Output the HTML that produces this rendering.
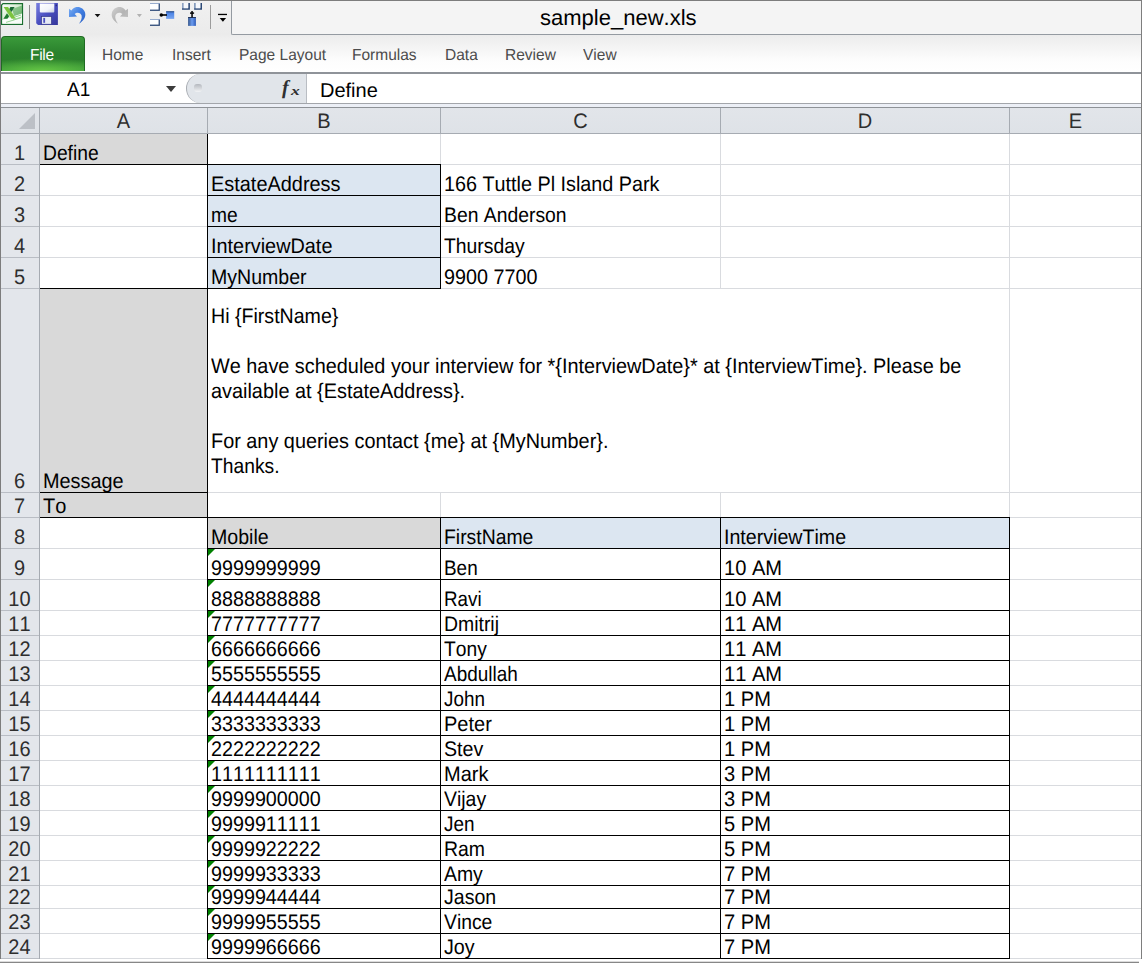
<!DOCTYPE html>
<html><head><meta charset="utf-8"><title>sample_new.xls</title>
<style>
html,body{margin:0;padding:0;}
body{font-kerning:none;font-feature-settings:"kern" 0,"liga" 0;text-rendering:geometricPrecision;width:1143px;height:964px;overflow:hidden;position:relative;background:#fff;font-family:"Liberation Sans",Arial,sans-serif;}
.a{position:absolute;}
.t{position:absolute;white-space:nowrap;font-size:20px;line-height:23px;color:#000;}
.c{position:absolute;white-space:nowrap;font-size:21px;line-height:23px;color:#000;transform-origin:0 0;transform:scaleX(0.952);}
.rh{position:absolute;left:1px;width:37px;text-align:center;font-size:21px;line-height:23px;color:#2e2e2e;transform:scaleX(0.952);}
.ch{position:absolute;top:110px;text-align:center;font-size:21px;line-height:23px;color:#2e2e2e;transform:scaleX(0.952);}
.tab{position:absolute;top:46px;font-size:16px;line-height:20px;color:#4c4c4c;white-space:nowrap;transform-origin:0 0;transform:scaleX(0.969);}
.tri{position:absolute;width:0;height:0;border-top:7px solid #008000;border-right:7px solid transparent;}
</style></head><body>

<div class="a" id="titlebar" style="left:0;top:0;width:1143px;height:35px;background:linear-gradient(#f1f1f1,#ebebeb);"></div>
<div class="a" id="titlebox" style="left:231px;top:1px;width:910px;height:33px;background:#f4f4f4;border-left:1px solid #949aa1;border-bottom:1px solid #949aa1;border-radius:0 0 0 2px;"></div>
<div class="t" id="title" style="left:540px;top:5px;font-size:22px;line-height:26px;">sample_new.xls</div>
<div class="a" id="ribbon" style="left:0;top:35px;width:1143px;height:37px;background:linear-gradient(#ececec 0%,#f3f3f3 30%,#fdfdfd 70%,#ffffff 100%);"></div>
<div class="a" id="ribbonline" style="left:0;top:72px;width:1143px;height:2px;background:#8f9399;"></div>
<div class="a" id="file" style="left:1px;top:36px;width:84px;height:35px;border-radius:4px 4px 0 0;background:radial-gradient(ellipse 75px 13px at 50% 100%,#66c644 0%,rgba(102,198,68,0) 100%),linear-gradient(#3a9a3a 0%,#2b832d 45%,#2a7f2c 70%,#35963a 100%);border:1px solid #1f6b22;border-bottom:none;box-sizing:border-box;"></div>
<div class="tab" style="left:30px;color:#fff;letter-spacing:-0.3px;">File</div>
<div class="tab" style="left:102px;">Home</div>
<div class="tab" style="left:172px;">Insert</div>
<div class="tab" style="left:239px;">Page Layout</div>
<div class="tab" style="left:352px;">Formulas</div>
<div class="tab" style="left:445px;">Data</div>
<div class="tab" style="left:505px;">Review</div>
<div class="tab" style="left:583px;">View</div>
<svg class="a" id="qat" style="left:0;top:0;" width="232" height="35" viewBox="0 0 232 35">
<defs>
<linearGradient id="gx" x1="0" y1="0" x2="1" y2="1"><stop offset="0" stop-color="#ffffff"/><stop offset="0.45" stop-color="#d6ecd2"/><stop offset="1" stop-color="#7fc07a"/></linearGradient>
<linearGradient id="gs" x1="0" y1="0" x2="1" y2="1"><stop offset="0" stop-color="#7a80e0"/><stop offset="0.5" stop-color="#4a4fc0"/><stop offset="1" stop-color="#34369a"/></linearGradient>
<linearGradient id="gl" x1="0" y1="0" x2="1" y2="1"><stop offset="0" stop-color="#ffffff"/><stop offset="0.6" stop-color="#f2f4fa"/><stop offset="1" stop-color="#c5cce0"/></linearGradient>
<linearGradient id="gu" x1="0" y1="0" x2="1" y2="1"><stop offset="0" stop-color="#7db0f5"/><stop offset="0.5" stop-color="#3f7de0"/><stop offset="1" stop-color="#2a5fc4"/></linearGradient>
<linearGradient id="gr" x1="0" y1="0" x2="1" y2="1"><stop offset="0" stop-color="#d2d2d2"/><stop offset="0.5" stop-color="#b4b4b4"/><stop offset="1" stop-color="#c4c4c4"/></linearGradient>
<linearGradient id="gb" x1="0" y1="0" x2="0" y2="1"><stop offset="0" stop-color="#2d4f86"/><stop offset="0.3" stop-color="#4f86e6"/><stop offset="1" stop-color="#7aa6f0"/></linearGradient>
<linearGradient id="gb2" x1="0" y1="0" x2="1" y2="0"><stop offset="0" stop-color="#33558c"/><stop offset="0.5" stop-color="#6c9cf0"/><stop offset="1" stop-color="#2f5cb8"/></linearGradient>
</defs>
<!-- excel icon -->
<path d="M3 3.6 H22.5 V24.3 H1.6 V5 Z" fill="url(#gx)" stroke="#1b6e30" stroke-width="1.2"/>
<path d="M12 9 L22 5.5 L22 14 L14.5 16.5 Z" fill="#4aa24e" opacity="0.55"/>
<path d="M2.3 20 L22 13.4 L22 23.7 L2.3 23.7 Z" fill="#ffffff" opacity="0.92"/>
<path d="M3.6 7 L8 7 L16 18.8 L11.6 18.8 Z" fill="#7cc43e"/>
<path d="M10.4 7 L14.6 7 L11.4 11.9 L9.3 9 Z" fill="#1c6a38"/>
<path d="M7 13.2 L9.1 16.2 L7.4 18.8 L3.4 18.8 Z" fill="#1f7a30"/>
<path d="M14.5 17.2 l6.5 -2.2 M13 19.8 l8.5 -2.8 M6 22.4 l15 -4.6" stroke="#8fd08a" stroke-width="0.9" fill="none"/>
<!-- separators -->
<rect x="29" y="5" width="1" height="24" fill="#8c8c8c"/>
<rect x="210" y="5" width="1" height="24" fill="#9c9c9c"/>
<!-- save -->
<path d="M36.2 3 H57.9 V24.9 H38 L36.2 23.2 Z" fill="url(#gs)"/>
<path d="M39.8 3.6 H54.3 V11.6 Q54.3 12.6 53.3 12.6 H40.8 Q39.8 12.6 39.8 11.6 Z" fill="url(#gl)"/>
<rect x="55.6" y="4.6" width="1.3" height="1.6" fill="#2b2c78"/>
<rect x="41.6" y="16.6" width="9.8" height="7.6" fill="#e6eaf4" stroke="#2f317f" stroke-width="0.6"/>
<rect x="43.3" y="17.9" width="1.8" height="4.9" fill="#4a4fc0"/>
<!-- undo -->
<path d="M69 8.8 L69 17 L77 16.4 L74.6 14.1 C76.8 11.8 80.8 12.4 81.6 15.6 C82.2 18.6 80.8 21.4 79 23.8 C83.2 21.2 86.2 17.2 85.1 12.8 C84 8.2 79.2 5.8 75 7.4 C73.4 8 72.4 9 71.4 10.6 Z" fill="url(#gu)"/>
<path d="M94.7 13.9 H100.4 L97.55 17.3 Z" fill="#111"/>
<!-- redo -->
<path d="M128 8.8 L128 17 L120 16.4 L122.4 14.1 C120.2 11.8 116.2 12.4 115.4 15.6 C114.8 18.6 116.2 21.4 118 23.8 C113.8 21.2 110.8 17.2 111.9 12.8 C113 8.2 117.8 5.8 122 7.4 C123.6 8 124.6 9 125.6 10.6 Z" fill="url(#gr)"/>
<path d="M136.9 13.9 H141.9 L139.4 17.2 Z" fill="#b2b2b2"/>
<!-- trace 1 -->
<rect x="150" y="3.1" width="9.9" height="7.8" fill="#2d4a78"/><rect x="150" y="3.6" width="8.6" height="6" fill="#fdfeff"/><rect x="150" y="3.1" width="9.9" height="0.7" fill="#9db4d8"/>
<rect x="150" y="19.1" width="9.9" height="6.8" fill="#2d4a78"/><rect x="150" y="19.6" width="8.6" height="5" fill="#fdfeff"/><rect x="150" y="19.1" width="9.9" height="0.7" fill="#9db4d8"/>
<rect x="166.1" y="11.1" width="8.1" height="7.8" fill="url(#gb)"/>
<rect x="161" y="14.2" width="6" height="1.6" fill="#000"/><circle cx="161.3" cy="15" r="1.8" fill="#000"/>
<!-- trace 2 -->
<path d="M182 3 H183.6 V8.2 H188.2 V3 H189.9 V9.8 H182 Z" fill="#2d4a78"/><rect x="182" y="3" width="1.6" height="5.4" fill="#8ea3c4"/><rect x="183.6" y="3" width="4.6" height="5.2" fill="#f6f8fc"/>
<path d="M194.1 3 H195.7 V8.2 H200.3 V3 H202 V9.8 H194.1 Z" fill="#2d4a78"/><rect x="194.1" y="3" width="1.6" height="5.4" fill="#8ea3c4"/><rect x="195.7" y="3" width="4.6" height="5.2" fill="#f6f8fc"/>
<rect x="188.1" y="17.1" width="7.8" height="8.8" fill="url(#gb2)"/><rect x="188.1" y="17.1" width="7.8" height="0.9" fill="#1f2f50"/>
<rect x="191.3" y="11" width="1.5" height="6.4" fill="#000"/><rect x="190" y="12.4" width="4.1" height="1.4" fill="#000"/>
<!-- customize -->
<rect x="218" y="13.8" width="9" height="1.3" fill="#000"/>
<path d="M219.7 18.1 H226.1 L222.9 21.7 Z" fill="#000"/>
</svg>
<div class="a" id="fbar" style="left:0;top:74px;width:1143px;height:29px;background:#fff;"></div>
<div class="a" id="fline" style="left:0;top:103px;width:1143px;height:1px;background:#a3a6ab;"></div>
<div class="a" id="fstrip" style="left:0;top:104px;width:1143px;height:3px;background:#eceff6;"></div>
<div class="a" id="hline" style="left:0;top:107px;width:1143px;height:1px;background:#8e9297;"></div>
<div class="a" id="pill" style="left:186px;top:74px;width:121px;height:29px;background:#e1e5ea;border-left:1px solid #a9adb3;border-right:1px solid #b9bdc3;border-radius:14.5px 0 0 14.5px;box-sizing:border-box;"></div>
<div class="a" id="pilldot" style="left:194px;top:84px;width:8px;height:8px;border-radius:3px;background:linear-gradient(#b4b8be,#f2f4f6);"></div>
<div class="t" id="namebox" style="left:67px;top:79px;font-size:19.5px;line-height:22px;transform-origin:0 0;transform:scaleX(0.975);">A1</div>
<div class="a" id="ddarrow" style="left:166px;top:85.5px;width:0;height:0;border-left:5.5px solid transparent;border-right:5.5px solid transparent;border-top:6.5px solid #3c3c3c;"></div>
<div class="t" id="fx" style="left:282px;top:76px;font-family:'Liberation Serif',serif;font-style:italic;font-weight:bold;font-size:20px;line-height:24px;color:#303030;">f</div>
<div class="t" id="fx2" style="left:290.5px;top:81px;font-family:'Liberation Serif',serif;font-style:italic;font-weight:bold;font-size:13px;line-height:20px;color:#303030;transform-origin:0 0;transform:scaleX(1.35);">x</div>
<div class="t" id="ftext" style="left:320px;top:80px;font-size:20px;line-height:22px;">Define</div>
<div class="a" id="colhdr" style="left:0;top:108px;width:1143px;height:26px;background:linear-gradient(#e2e5ea,#dee2e7);"></div>
<div class="a" id="rowhdr" style="left:0;top:134px;width:39px;height:825px;background:#e3e6eb;"></div>
<div class="a" style="left:40px;top:134px;width:167px;height:30px;background:#d9d9d9;"></div>
<div class="a" style="left:208px;top:165px;width:232px;height:123px;background:#dce6f1;"></div>
<div class="a" style="left:40px;top:289px;width:167px;height:228px;background:#d9d9d9;"></div>
<div class="a" style="left:208px;top:518px;width:232px;height:30px;background:#d9d9d9;"></div>
<div class="a" style="left:441px;top:518px;width:568px;height:30px;background:#dce6f1;"></div>
<div class="a" style="left:40px;top:164px;width:1101px;height:1px;background:#d9dbdf;"></div>
<div class="a" style="left:40px;top:195px;width:1101px;height:1px;background:#d9dbdf;"></div>
<div class="a" style="left:40px;top:226px;width:1101px;height:1px;background:#d9dbdf;"></div>
<div class="a" style="left:40px;top:257px;width:1101px;height:1px;background:#d9dbdf;"></div>
<div class="a" style="left:40px;top:288px;width:1101px;height:1px;background:#d9dbdf;"></div>
<div class="a" style="left:40px;top:492px;width:1101px;height:1px;background:#d9dbdf;"></div>
<div class="a" style="left:40px;top:517px;width:1101px;height:1px;background:#d9dbdf;"></div>
<div class="a" style="left:40px;top:548px;width:1101px;height:1px;background:#d9dbdf;"></div>
<div class="a" style="left:40px;top:579px;width:1101px;height:1px;background:#d9dbdf;"></div>
<div class="a" style="left:40px;top:610px;width:1101px;height:1px;background:#d9dbdf;"></div>
<div class="a" style="left:40px;top:635px;width:1101px;height:1px;background:#d9dbdf;"></div>
<div class="a" style="left:40px;top:660px;width:1101px;height:1px;background:#d9dbdf;"></div>
<div class="a" style="left:40px;top:685px;width:1101px;height:1px;background:#d9dbdf;"></div>
<div class="a" style="left:40px;top:710px;width:1101px;height:1px;background:#d9dbdf;"></div>
<div class="a" style="left:40px;top:735px;width:1101px;height:1px;background:#d9dbdf;"></div>
<div class="a" style="left:40px;top:760px;width:1101px;height:1px;background:#d9dbdf;"></div>
<div class="a" style="left:40px;top:785px;width:1101px;height:1px;background:#d9dbdf;"></div>
<div class="a" style="left:40px;top:810px;width:1101px;height:1px;background:#d9dbdf;"></div>
<div class="a" style="left:40px;top:835px;width:1101px;height:1px;background:#d9dbdf;"></div>
<div class="a" style="left:40px;top:860px;width:1101px;height:1px;background:#d9dbdf;"></div>
<div class="a" style="left:40px;top:885px;width:1101px;height:1px;background:#d9dbdf;"></div>
<div class="a" style="left:40px;top:908px;width:1101px;height:1px;background:#d9dbdf;"></div>
<div class="a" style="left:40px;top:933px;width:1101px;height:1px;background:#d9dbdf;"></div>
<div class="a" style="left:40px;top:958px;width:1101px;height:1px;background:#d9dbdf;"></div>
<div class="a" style="left:207px;top:134px;width:1px;height:825px;background:#d9dbdf;"></div>
<div class="a" style="left:440px;top:134px;width:1px;height:825px;background:#d9dbdf;"></div>
<div class="a" style="left:720px;top:134px;width:1px;height:825px;background:#d9dbdf;"></div>
<div class="a" style="left:1009px;top:134px;width:1px;height:825px;background:#d9dbdf;"></div>
<div class="a" style="left:208px;top:289px;width:801px;height:203px;background:#fff;"></div>
<div class="a" style="left:0px;top:133px;width:1143px;height:1px;background:#a6abb2;"></div>
<div class="a" style="left:39px;top:108px;width:1px;height:25px;background:#a6abb2;"></div>
<div class="a" style="left:207px;top:108px;width:1px;height:25px;background:#a6abb2;"></div>
<div class="a" style="left:440px;top:108px;width:1px;height:25px;background:#a6abb2;"></div>
<div class="a" style="left:720px;top:108px;width:1px;height:25px;background:#a6abb2;"></div>
<div class="a" style="left:1009px;top:108px;width:1px;height:25px;background:#a6abb2;"></div>
<div class="a" style="left:39px;top:134px;width:1px;height:825px;background:#a6abb2;"></div>
<div class="a" style="left:0px;top:164px;width:39px;height:1px;background:#b9bdc4;"></div>
<div class="a" style="left:0px;top:195px;width:39px;height:1px;background:#b9bdc4;"></div>
<div class="a" style="left:0px;top:226px;width:39px;height:1px;background:#b9bdc4;"></div>
<div class="a" style="left:0px;top:257px;width:39px;height:1px;background:#b9bdc4;"></div>
<div class="a" style="left:0px;top:288px;width:39px;height:1px;background:#b9bdc4;"></div>
<div class="a" style="left:0px;top:492px;width:39px;height:1px;background:#b9bdc4;"></div>
<div class="a" style="left:0px;top:517px;width:39px;height:1px;background:#b9bdc4;"></div>
<div class="a" style="left:0px;top:548px;width:39px;height:1px;background:#b9bdc4;"></div>
<div class="a" style="left:0px;top:579px;width:39px;height:1px;background:#b9bdc4;"></div>
<div class="a" style="left:0px;top:610px;width:39px;height:1px;background:#b9bdc4;"></div>
<div class="a" style="left:0px;top:635px;width:39px;height:1px;background:#b9bdc4;"></div>
<div class="a" style="left:0px;top:660px;width:39px;height:1px;background:#b9bdc4;"></div>
<div class="a" style="left:0px;top:685px;width:39px;height:1px;background:#b9bdc4;"></div>
<div class="a" style="left:0px;top:710px;width:39px;height:1px;background:#b9bdc4;"></div>
<div class="a" style="left:0px;top:735px;width:39px;height:1px;background:#b9bdc4;"></div>
<div class="a" style="left:0px;top:760px;width:39px;height:1px;background:#b9bdc4;"></div>
<div class="a" style="left:0px;top:785px;width:39px;height:1px;background:#b9bdc4;"></div>
<div class="a" style="left:0px;top:810px;width:39px;height:1px;background:#b9bdc4;"></div>
<div class="a" style="left:0px;top:835px;width:39px;height:1px;background:#b9bdc4;"></div>
<div class="a" style="left:0px;top:860px;width:39px;height:1px;background:#b9bdc4;"></div>
<div class="a" style="left:0px;top:885px;width:39px;height:1px;background:#b9bdc4;"></div>
<div class="a" style="left:0px;top:908px;width:39px;height:1px;background:#b9bdc4;"></div>
<div class="a" style="left:0px;top:933px;width:39px;height:1px;background:#b9bdc4;"></div>
<div class="a" style="left:0px;top:958px;width:39px;height:1px;background:#b9bdc4;"></div>
<div class="a" style="left:40px;top:164px;width:401px;height:1px;background:#000;"></div>
<div class="a" style="left:207px;top:195px;width:234px;height:1px;background:#000;"></div>
<div class="a" style="left:207px;top:226px;width:234px;height:1px;background:#000;"></div>
<div class="a" style="left:207px;top:257px;width:234px;height:1px;background:#000;"></div>
<div class="a" style="left:40px;top:288px;width:401px;height:1px;background:#000;"></div>
<div class="a" style="left:40px;top:492px;width:168px;height:1px;background:#000;"></div>
<div class="a" style="left:40px;top:517px;width:970px;height:1px;background:#000;"></div>
<div class="a" style="left:207px;top:548px;width:803px;height:1px;background:#000;"></div>
<div class="a" style="left:207px;top:579px;width:803px;height:1px;background:#000;"></div>
<div class="a" style="left:207px;top:610px;width:803px;height:1px;background:#000;"></div>
<div class="a" style="left:207px;top:635px;width:803px;height:1px;background:#000;"></div>
<div class="a" style="left:207px;top:660px;width:803px;height:1px;background:#000;"></div>
<div class="a" style="left:207px;top:685px;width:803px;height:1px;background:#000;"></div>
<div class="a" style="left:207px;top:710px;width:803px;height:1px;background:#000;"></div>
<div class="a" style="left:207px;top:735px;width:803px;height:1px;background:#000;"></div>
<div class="a" style="left:207px;top:760px;width:803px;height:1px;background:#000;"></div>
<div class="a" style="left:207px;top:785px;width:803px;height:1px;background:#000;"></div>
<div class="a" style="left:207px;top:810px;width:803px;height:1px;background:#000;"></div>
<div class="a" style="left:207px;top:835px;width:803px;height:1px;background:#000;"></div>
<div class="a" style="left:207px;top:860px;width:803px;height:1px;background:#000;"></div>
<div class="a" style="left:207px;top:885px;width:803px;height:1px;background:#000;"></div>
<div class="a" style="left:207px;top:908px;width:803px;height:1px;background:#000;"></div>
<div class="a" style="left:207px;top:933px;width:803px;height:1px;background:#000;"></div>
<div class="a" style="left:207px;top:958px;width:803px;height:1px;background:#000;"></div>
<div class="a" style="left:207px;top:134px;width:1px;height:825px;background:#000;"></div>
<div class="a" style="left:440px;top:164px;width:1px;height:125px;background:#000;"></div>
<div class="a" style="left:440px;top:517px;width:1px;height:442px;background:#000;"></div>
<div class="a" style="left:720px;top:517px;width:1px;height:442px;background:#000;"></div>
<div class="a" style="left:1009px;top:517px;width:1px;height:442px;background:#000;"></div>
<div class="a" style="left:19px;top:113px;width:0;height:0;border-left:16px solid transparent;border-bottom:16px solid #bcc0c6;"></div>
<div class="ch" style="left:40px;width:167px;">A</div>
<div class="ch" style="left:208px;width:232px;">B</div>
<div class="ch" style="left:441px;width:279px;">C</div>
<div class="ch" style="left:721px;width:288px;">D</div>
<div class="ch" style="left:1010px;width:131px;">E</div>
<div class="rh" style="top:142px;">1</div>
<div class="rh" style="top:173px;">2</div>
<div class="rh" style="top:204px;">3</div>
<div class="rh" style="top:235px;">4</div>
<div class="rh" style="top:266px;">5</div>
<div class="rh" style="top:470px;">6</div>
<div class="rh" style="top:495px;">7</div>
<div class="rh" style="top:526px;">8</div>
<div class="rh" style="top:557px;">9</div>
<div class="rh" style="top:588px;">10</div>
<div class="rh" style="top:613px;">11</div>
<div class="rh" style="top:638px;">12</div>
<div class="rh" style="top:663px;">13</div>
<div class="rh" style="top:688px;">14</div>
<div class="rh" style="top:713px;">15</div>
<div class="rh" style="top:738px;">16</div>
<div class="rh" style="top:763px;">17</div>
<div class="rh" style="top:788px;">18</div>
<div class="rh" style="top:813px;">19</div>
<div class="rh" style="top:838px;">20</div>
<div class="rh" style="top:863px;">21</div>
<div class="rh" style="top:886px;">22</div>
<div class="rh" style="top:911px;">23</div>
<div class="rh" style="top:936px;">24</div>
<div class="c" style="left:43px;top:142px;transform:scaleX(0.9168);">Define</div>
<div class="c" style="left:211px;top:173px;transform:scaleX(0.9482);">EstateAddress</div>
<div class="c" style="left:444px;top:173px;transform:scaleX(0.9420);">166 Tuttle Pl Island Park</div>
<div class="c" style="left:211px;top:204px;transform:scaleX(0.9139);">me</div>
<div class="c" style="left:444px;top:204px;transform:scaleX(0.9211);">Ben Anderson</div>
<div class="c" style="left:211px;top:235px;transform:scaleX(0.9458);">InterviewDate</div>
<div class="c" style="left:444px;top:235px;transform:scaleX(0.9206);">Thursday</div>
<div class="c" style="left:211px;top:266px;transform:scaleX(0.9311);">MyNumber</div>
<div class="c" style="left:444px;top:266px;transform:scaleX(0.9406);">9900 7700</div>
<div class="c" style="left:43px;top:470px;transform:scaleX(0.9463);">Message</div>
<div class="c" style="left:43px;top:495px;transform:scaleX(0.9520);">To</div>
<div class="c" style="left:211px;top:305px;transform:scaleX(0.9330);">Hi {FirstName}</div>
<div class="c" style="left:211px;top:355px;transform:scaleX(0.9454);">We have scheduled your interview for *{InterviewDate}* at {InterviewTime}. Please be</div>
<div class="c" style="left:211px;top:380px;transform:scaleX(0.9463);">available at {EstateAddress}.</div>
<div class="c" style="left:211px;top:430px;transform:scaleX(0.9458);">For any queries contact {me} at {MyNumber}.</div>
<div class="c" style="left:211px;top:455px;transform:scaleX(0.9168);">Thanks.</div>
<div class="c" style="left:211px;top:526px;transform:scaleX(0.9330);">Mobile</div>
<div class="c" style="left:444px;top:526px;transform:scaleX(0.9225);">FirstName</div>
<div class="c" style="left:724px;top:526px;transform:scaleX(0.9339);">InterviewTime</div>
<div class="c" style="left:211px;top:557px;transform:scaleX(0.9396);">9999999999</div>
<div class="c" style="left:444px;top:557px;transform:scaleX(0.9006);">Ben</div>
<div class="c" style="left:724px;top:557px;transform:scaleX(0.9568);">10 AM</div>
<div class="tri" style="left:208px;top:549px;"></div>
<div class="c" style="left:211px;top:588px;transform:scaleX(0.9396);">8888888888</div>
<div class="c" style="left:444px;top:588px;transform:scaleX(0.8949);">Ravi</div>
<div class="c" style="left:724px;top:588px;transform:scaleX(0.9568);">10 AM</div>
<div class="tri" style="left:208px;top:580px;"></div>
<div class="c" style="left:211px;top:613px;transform:scaleX(0.9396);">7777777777</div>
<div class="c" style="left:444px;top:613px;transform:scaleX(0.9244);">Dmitrij</div>
<div class="c" style="left:724px;top:613px;transform:scaleX(0.9568);">11 AM</div>
<div class="tri" style="left:208px;top:611px;"></div>
<div class="c" style="left:211px;top:638px;transform:scaleX(0.9396);">6666666666</div>
<div class="c" style="left:444px;top:638px;transform:scaleX(0.9158);">Tony</div>
<div class="c" style="left:724px;top:638px;transform:scaleX(0.9568);">11 AM</div>
<div class="tri" style="left:208px;top:636px;"></div>
<div class="c" style="left:211px;top:663px;transform:scaleX(0.9396);">5555555555</div>
<div class="c" style="left:444px;top:663px;transform:scaleX(0.9025);">Abdullah</div>
<div class="c" style="left:724px;top:663px;transform:scaleX(0.9568);">11 AM</div>
<div class="tri" style="left:208px;top:661px;"></div>
<div class="c" style="left:211px;top:688px;transform:scaleX(0.9396);">4444444444</div>
<div class="c" style="left:444px;top:688px;transform:scaleX(0.8987);">John</div>
<div class="c" style="left:724px;top:688px;transform:scaleX(0.9568);">1 PM</div>
<div class="tri" style="left:208px;top:686px;"></div>
<div class="c" style="left:211px;top:713px;transform:scaleX(0.9396);">3333333333</div>
<div class="c" style="left:444px;top:713px;transform:scaleX(0.9520);">Peter</div>
<div class="c" style="left:724px;top:713px;transform:scaleX(0.9568);">1 PM</div>
<div class="tri" style="left:208px;top:711px;"></div>
<div class="c" style="left:211px;top:738px;transform:scaleX(0.9396);">2222222222</div>
<div class="c" style="left:444px;top:738px;transform:scaleX(0.9349);">Stev</div>
<div class="c" style="left:724px;top:738px;transform:scaleX(0.9568);">1 PM</div>
<div class="tri" style="left:208px;top:736px;"></div>
<div class="c" style="left:211px;top:763px;transform:scaleX(0.9396);">1111111111</div>
<div class="c" style="left:444px;top:763px;transform:scaleX(0.9520);">Mark</div>
<div class="c" style="left:724px;top:763px;transform:scaleX(0.9568);">3 PM</div>
<div class="tri" style="left:208px;top:761px;"></div>
<div class="c" style="left:211px;top:788px;transform:scaleX(0.9396);">9999900000</div>
<div class="c" style="left:444px;top:788px;transform:scaleX(0.9253);">Vijay</div>
<div class="c" style="left:724px;top:788px;transform:scaleX(0.9568);">3 PM</div>
<div class="tri" style="left:208px;top:786px;"></div>
<div class="c" style="left:211px;top:813px;transform:scaleX(0.9396);">9999911111</div>
<div class="c" style="left:444px;top:813px;transform:scaleX(0.9015);">Jen</div>
<div class="c" style="left:724px;top:813px;transform:scaleX(0.9568);">5 PM</div>
<div class="tri" style="left:208px;top:811px;"></div>
<div class="c" style="left:211px;top:838px;transform:scaleX(0.9396);">9999922222</div>
<div class="c" style="left:444px;top:838px;transform:scaleX(0.9244);">Ram</div>
<div class="c" style="left:724px;top:838px;transform:scaleX(0.9568);">5 PM</div>
<div class="tri" style="left:208px;top:836px;"></div>
<div class="c" style="left:211px;top:863px;transform:scaleX(0.9396);">9999933333</div>
<div class="c" style="left:444px;top:863px;transform:scaleX(0.9234);">Amy</div>
<div class="c" style="left:724px;top:863px;transform:scaleX(0.9568);">7 PM</div>
<div class="tri" style="left:208px;top:861px;"></div>
<div class="c" style="left:211px;top:886px;transform:scaleX(0.9396);">9999944444</div>
<div class="c" style="left:444px;top:886px;transform:scaleX(0.9311);">Jason</div>
<div class="c" style="left:724px;top:886px;transform:scaleX(0.9568);">7 PM</div>
<div class="tri" style="left:208px;top:886px;"></div>
<div class="c" style="left:211px;top:911px;transform:scaleX(0.9396);">9999955555</div>
<div class="c" style="left:444px;top:911px;transform:scaleX(0.9196);">Vince</div>
<div class="c" style="left:724px;top:911px;transform:scaleX(0.9568);">7 PM</div>
<div class="tri" style="left:208px;top:909px;"></div>
<div class="c" style="left:211px;top:936px;transform:scaleX(0.9396);">9999966666</div>
<div class="c" style="left:444px;top:936px;transform:scaleX(0.9368);">Joy</div>
<div class="c" style="left:724px;top:936px;transform:scaleX(0.9568);">7 PM</div>
<div class="tri" style="left:208px;top:934px;"></div>
<div class="a" style="left:0;top:0;width:1143px;height:1px;background:#7d7d7d;"></div>
<div class="a" style="left:0;top:0;width:1px;height:959px;background:#7d7d7d;"></div>
<div class="a" style="left:1141px;top:0;width:1px;height:959px;background:#7e7e7e;"></div>
<div class="a" style="left:1142px;top:0;width:1px;height:964px;background:#fff;"></div>
<div class="a" style="left:0;top:959px;width:1143px;height:5px;background:#fff;"></div>
<div class="a" style="left:0;top:961px;width:1139px;height:1px;background:#dcdcdc;"></div>
<div class="a" style="left:0;top:962px;width:1139px;height:1px;background:#878787;"></div>
</body></html>
